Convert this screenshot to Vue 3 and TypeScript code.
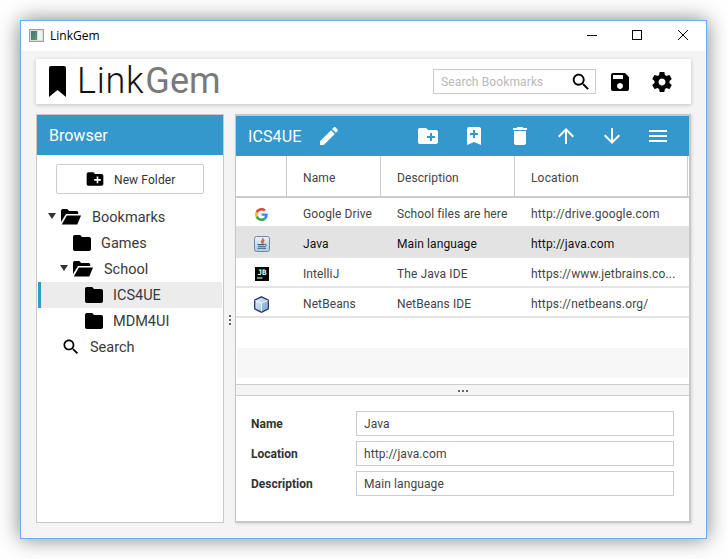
<script setup lang="ts">
interface TreeItem { label: string; icon: 'open' | 'closed' | 'search'; indent: number; arrow?: boolean; selected?: boolean; gap: number }
interface RowItem { icon: string; name: string; desc: string; loc: string; selected?: boolean }

const folder = 'M10 4H4c-1.1 0-1.99.9-1.99 2L2 18c0 1.1.9 2 2 2h16c1.1 0 2-.9 2-2V8c0-1.1-.9-2-2-2h-8l-2-2z'
const search = 'M15.5 14h-.79l-.28-.27C15.41 12.59 16 11.11 16 9.5 16 5.91 13.09 3 9.5 3S3 5.91 3 9.5 5.91 16 9.5 16c1.61 0 3.09-.59 4.23-1.57l.27.28v.79l5 4.99L20.49 19l-4.99-5zm-6 0C7.01 14 5 11.99 5 9.5S7.01 5 9.5 5 14 7.01 14 9.5 11.99 14 9.5 14z'
const newFolder = 'M20 6h-8l-2-2H4c-1.11 0-1.99.89-1.99 2L2 18c0 1.11.89 2 2 2h16c1.11 0 2-.89 2-2V8c0-1.11-.89-2-2-2zm-1 8h-3v3h-2v-3h-3v-2h3V9h2v3h3v2z'

const tree: TreeItem[] = [
  { label: 'Bookmarks', icon: 'open', indent: 10, arrow: true, gap: 11 },
  { label: 'Games', icon: 'closed', indent: 35, gap: 10 },
  { label: 'School', icon: 'open', indent: 22, arrow: true, gap: 11 },
  { label: 'ICS4UE', icon: 'closed', indent: 47, selected: true, gap: 10 },
  { label: 'MDM4UI', icon: 'closed', indent: 47, gap: 10 },
  { label: 'Search', icon: 'search', indent: 23, gap: 9 }
]

const tools: string[] = [
  newFolder,
  'M17 3H7c-1.1 0-2 .9-2 2v16l7-3 7 3V5c0-1.1-.9-2-2-2zm-4 8v3h-2v-3H8V9h3V6h2v3h3v2h-3z',
  'M6 19c0 1.1.9 2 2 2h8c1.1 0 2-.9 2-2V7H6v12zM19 4h-3.5l-1-1h-5l-1 1H5v2h14V4z',
  'M4 12l1.41 1.41L11 7.83V20h2V7.83l5.58 5.59L20 12l-8-8-8 8z',
  'M20 12l-1.41-1.41L13 16.17V4h-2v12.17l-5.58-5.59L4 12l8 8 8-8z',
  'M3 18h18v-2H3v2zm0-5h18v-2H3v2zm0-7v2h18V6H3z'
]

const columns: string[] = ['Name', 'Description', 'Location']

const rows: RowItem[] = [
  { icon: 'google', name: 'Google Drive', desc: 'School files are here', loc: 'http://drive.google.com' },
  { icon: 'java', name: 'Java', desc: 'Main language', loc: 'http://java.com', selected: true },
  { icon: 'jb', name: 'IntelliJ', desc: 'The Java IDE', loc: 'https://www.jetbrains.co...' },
  { icon: 'nb', name: 'NetBeans', desc: 'NetBeans IDE', loc: 'https://netbeans.org/' }
]

const fields = [
  { label: 'Name', value: 'Java' },
  { label: 'Location', value: 'http://java.com' },
  { label: 'Description', value: 'Main language' }
]
</script>

<template>
  <div class="stage">
    <div class="window">
      <div class="titlebar">
        <svg class="appicon" width="15" height="13" viewBox="0 0 15 13">
          <defs>
            <linearGradient id="appg" x1="0" y1="0" x2="1" y2="1">
              <stop offset="0" stop-color="#47707f" />
              <stop offset="1" stop-color="#5f9a72" />
            </linearGradient>
          </defs>
          <rect x="0.5" y="0.5" width="14" height="12" fill="#dcdcdc" stroke="#a0a0a0" />
          <rect x="2" y="2" width="6" height="9" fill="url(#appg)" />
          <rect x="9" y="2" width="4" height="9" fill="#f2f2f2" />
        </svg>
        <span class="apptitle">LinkGem</span>
        <div class="winbtns">
          <svg width="10" height="10" viewBox="0 0 10 10"><path d="M0 5.5h10" stroke="#000" /></svg>
          <svg width="10" height="10" viewBox="0 0 10 10"><rect x="0.5" y="0.5" width="9" height="9" fill="none" stroke="#000" /></svg>
          <svg class="closebtn" width="10" height="10" viewBox="0 0 10 10"><path d="M0 0l10 10M10 0L0 10" stroke="#000" stroke-width="1" /></svg>
        </div>
      </div>

      <div class="content">
        <header class="appbar">
          <svg class="logomark" width="17" height="31" viewBox="0 0 17 31">
            <path d="M2 0h13c1.1 0 2 .9 2 2v29l-8.500-7L0 31V2C0 .9.900 0 2 0z" fill="#000" />
          </svg>
          <div class="logotext"><span class="link">Link</span><span class="gem">Gem</span></div>
          <div class="searchbox">
            <span class="placeholder">Search Bookmarks</span>
            <svg width="22" height="22" viewBox="0 0 24 24"><path :d="search" fill="#000" /></svg>
          </div>
          <svg class="save" width="24" height="24" viewBox="0 0 24 24">
            <path d="M17 3H5c-1.110 0-2 .9-2 2v14c0 1.100.890 2 2 2h14c1.100 0 2-.9 2-2V7l-4-4zm-5 16c-1.660 0-3-1.340-3-3s1.340-3 3-3 3 1.340 3 3-1.340 3-3 3zm3-10H5V5h10v4z" fill="#000" />
          </svg>
          <svg class="gear" width="24" height="24" viewBox="0 0 24 24">
            <path d="M19.430 12.980c.04-.32.07-.64.07-.98s-.03-.66-.07-.98l2.110-1.650c.19-.15.24-.42.12-.64l-2-3.460c-.12-.22-.39-.3-.61-.22l-2.490 1c-.52-.4-1.080-.73-1.690-.98l-.38-2.650C14.460 2.180 14.250 2 14 2h-4c-.25 0-.46.18-.49.42l-.38 2.650c-.61.25-1.170.59-1.690.98l-2.490-1c-.23-.09-.49 0-.61.22l-2 3.460c-.13.22-.07.49.12.64l2.110 1.650c-.04.32-.07.65-.07.98s.03.66.07.98l-2.110 1.650c-.19.15-.24.42-.12.64l2 3.460c.12.22.39.3.61.22l2.490-1c.52.4 1.080.73 1.690.98l.38 2.650c.03.24.24.42.49.42h4c.25 0 .46-.18.49-.42l.38-2.650c.61-.25 1.170-.59 1.690-.98l2.490 1c.23.09.49 0 .61-.22l2-3.460c.12-.22.07-.49-.12-.64l-2.110-1.650zM12 15.500c-1.930 0-3.500-1.570-3.500-3.500s1.570-3.500 3.500-3.500 3.500 1.570 3.500 3.500-1.570 3.500-3.500 3.500z" fill="#000" />
          </svg>
        </header>

        <div class="panes">
          <aside class="browser">
            <div class="browser-head">Browser</div>
            <div class="newfolder-wrap">
              <div class="newfolder">
                <svg width="20" height="20" viewBox="0 0 24 24"><path :d="newFolder" fill="#000" /></svg>
                <span class="newfolder-label">New Folder</span>
              </div>
            </div>
            <ul class="tree">
              <li v-for="item in tree" :key="item.label" class="node" :class="{ selected: item.selected }" :style="{ paddingLeft: item.indent + 'px' }">
                <span v-if="item.arrow" class="arrow"></span>
                <svg v-if="item.icon === 'closed'" width="18" height="16" viewBox="2 4 20 16" preserveAspectRatio="none"><path :d="folder" fill="#000" /></svg>
                <svg v-else-if="item.icon === 'open'" width="20" height="16" viewBox="0 0 20 16">
                  <path d="M0 2C0 .9.8 0 1.800 0h4.400l2 2h7.300c1 0 1.700.7 1.700 1.600V5H5L0 13V2z" fill="#000" />
                  <path d="M5.800 6.500H20L16.300 15.600H.8z" fill="#000" />
                </svg>
                <svg v-else width="20" height="20" viewBox="0 0 24 24"><path :d="search" fill="#000" /></svg>
                <span class="label" :style="{ marginLeft: item.gap + 'px' }">{{ item.label }}</span>
              </li>
            </ul>
          </aside>

          <div class="vsplit"><i></i><i></i><i></i></div>

          <section class="detail">
            <div class="detail-head">
              <span class="folder-title">ICS4UE</span>
              <svg class="pencil" width="24" height="24" viewBox="0 0 24 24">
                <path d="M3 17.250V21h3.750L17.810 9.940l-3.750-3.750L3 17.250zM20.710 7.040c.39-.39.39-1.020 0-1.410l-2.340-2.340c-.39-.39-1.020-.39-1.410 0l-1.830 1.830 3.750 3.750 1.830-1.830z" fill="#fff" />
              </svg>
              <div class="tools">
                <svg v-for="(d, i) in tools" :key="i" width="24" height="24" viewBox="0 0 24 24"><path :d="d" fill="#fff" /></svg>
              </div>
            </div>

            <div class="table">
              <div class="thead">
                <div class="cell-icon th"></div>
                <div v-for="c in columns" :key="c" class="th" :class="'col-' + c.toLowerCase()">{{ c }}</div>
              </div>
              <div v-for="r in rows" :key="r.name" class="row" :class="{ selected: r.selected }">
                <div class="cell-icon">
                  <svg v-if="r.icon === 'google'" width="13" height="13" viewBox="0 0 48 48">
                    <path fill="#EA4335" d="M24 9.500c3.500 0 6.700 1.200 9.200 3.600l6.900-6.900C35.900 2.400 30.500 0 24 0 14.600 0 6.500 5.400 2.600 13.200l8 6.200C12.400 13.700 17.700 9.500 24 9.500z" />
                    <path fill="#4285F4" d="M47 24.500c0-1.600-.1-3.100-.4-4.500H24v9h12.900c-.6 3-2.200 5.500-4.700 7.200l7.700 6C44.400 38 47 31.800 47 24.500z" />
                    <path fill="#FBBC05" d="M10.600 28.600c-.5-1.400-.8-3-.8-4.600s.3-3.200.8-4.600l-8-6.200C.9 16.500 0 20.100 0 24s.9 7.500 2.600 10.800l8-6.200z" />
                    <path fill="#34A853" d="M24 48c6.500 0 11.900-2.100 15.900-5.800l-7.700-6c-2.200 1.400-4.900 2.300-8.200 2.300-6.300 0-11.600-4.200-13.400-9.900l-8 6.200C6.500 42.600 14.600 48 24 48z" />
                  </svg>
                  <svg v-else-if="r.icon === 'java'" width="16" height="16" viewBox="0 0 16 16">
                    <defs>
                      <linearGradient id="javag" x1="0" y1="0" x2="0" y2="1">
                        <stop offset="0" stop-color="#eef2f6" />
                        <stop offset="1" stop-color="#b4c7d9" />
                      </linearGradient>
                    </defs>
                    <rect x="0.500" y="0.500" width="15" height="15" rx="2" fill="url(#javag)" stroke="#6d8aa5" />
                    <path d="M8.800 2.200c1 1.500-2.200 2.400-1 4.200.2.300.5.500.8.700-.4-1.200 2-1.900 1-3.500" fill="none" stroke="#d9601f" stroke-width="1.400" />
                    <path d="M3.500 8.500h7M4 10.300h6M3.500 12.200h8.500" stroke="#2f5f86" stroke-width="1.100" fill="none" />
                    <path d="M10.500 8.200c2.500-.2 2.500 2.100-.5 2.500" stroke="#2f5f86" fill="none" stroke-width=".9" />
                  </svg>
                  <svg v-else-if="r.icon === 'jb'" width="14" height="14" viewBox="0 0 14 14">
                    <rect width="14" height="14" fill="#000" />
                    <text x="7" y="8" text-anchor="middle" class="jbtext">JB</text>
                    <rect x="2" y="10.500" width="5.500" height="1" fill="#fff" />
                  </svg>
                  <svg v-else width="17" height="17" viewBox="0 0 16 17">
                    <defs>
                      <linearGradient id="nbg" x1="0" y1="0" x2="1" y2="1">
                        <stop offset="0" stop-color="#e4f0f8" />
                        <stop offset="1" stop-color="#8fb7d8" />
                      </linearGradient>
                    </defs>
                    <path d="M8 .8l6.600 3.200c.4 3.200.4 6 0 9L8 16.200 1.400 13c-.4-3-.4-5.800 0-9z" fill="url(#nbg)" stroke="#24356f" stroke-width="1.300" />
                    <path d="M2 4.500L8 7l6-2.500M8 7v8.500" stroke="#f3f8fc" stroke-width=".9" fill="none" />
                    <path d="M8.500 7.500l5-2v7.300l-5 2.300z" fill="#7ba5cc" opacity=".55" />
                  </svg>
                </div>
                <div class="td col-name">{{ r.name }}</div>
                <div class="td col-description">{{ r.desc }}</div>
                <div class="td col-location">{{ r.loc }}</div>
              </div>
              <div class="blank"></div>
              <div class="blank odd"></div>
            </div>

            <div class="hsplit"><i></i><i></i><i></i></div>

            <form class="form">
              <div v-for="f in fields" :key="f.label" class="field">
                <label>{{ f.label }}</label>
                <div class="input">{{ f.value }}</div>
              </div>
            </form>
          </section>
        </div>
      </div>
    </div>
  </div>
</template>

<style>
html, body { margin: 0; background: #fff; overflow: hidden; }
</style>

<style scoped>
.stage {
  width: 727px;
  height: 559px;
  box-sizing: border-box;
  padding: 20px;
  font-family: Roboto, sans-serif;
  font-size: 12px;
  color: #333;
}
.window {
  width: 687px;
  height: 519px;
  box-sizing: border-box;
  border: 1px solid #64b0ff;
  background: #f4f4f4;
  box-shadow: 0 0 20px rgba(0, 0, 0, 0.5);
  display: flex;
  flex-direction: column;
}
.titlebar {
  height: 30px;
  flex: none;
  box-sizing: border-box;
  padding: 0 0 2px 8px;
  background: #fff;
  display: flex;
  align-items: center;
}
.appicon { flex: none; }
.apptitle {
  margin-left: 6px;
  font-family: "Open Sans", sans-serif;
  font-size: 12px;
  color: #000;
}
.winbtns {
  margin-left: auto;
  margin-right: 18px;
  display: flex;
  gap: 35px;
}
.closebtn { margin-left: 1px; }
.content {
  flex: 1;
  min-height: 0;
  display: flex;
  flex-direction: column;
  padding: 8px 15px 15px;
  gap: 10px;
}
.appbar {
  height: 45px;
  flex: none;
  background: #fff;
  box-shadow: 0 1px 4px rgba(0, 0, 0, 0.22);
  display: flex;
  align-items: center;
  padding-left: 13px;
}
.logomark { flex: none; }
.logotext {
  margin-left: 11px;
  font-size: 36px;
  font-weight: 300;
  line-height: 45px;
  letter-spacing: 0.7px;
}
.link { color: #111; }
.gem { color: #7a7a7a; font-weight: 400; margin-left: 1px; letter-spacing: 0.1px; }
.searchbox {
  margin-left: auto;
  width: 163px;
  height: 25px;
  box-sizing: border-box;
  border: 1px solid #ccc;
  display: flex;
  align-items: center;
  justify-content: space-between;
  padding: 0 3px 0 7px;
}
.placeholder { font-size: 12px; color: #b9b9b9; letter-spacing: 0.12px; }
.save { margin-left: 12px; flex: none; }
.gear { margin-left: 18px; margin-right: 17px; flex: none; }

.panes {
  flex: 1;
  min-height: 0;
  display: flex;
}
.browser {
  width: 188px;
  flex: none;
  box-sizing: border-box;
  background: #fff;
  border: 1px solid #c8c8c8;
  display: flex;
  flex-direction: column;
}
.browser-head {
  height: 40px;
  flex: none;
  background: #3498cd;
  color: #fff;
  font-size: 16px;
  line-height: 42px;
  padding-left: 12px;
}
.newfolder-wrap { padding: 9px 19px 0; }
.newfolder {
  height: 30px;
  box-sizing: border-box;
  border: 1px solid #ccc;
  border-radius: 2px;
  display: flex;
  align-items: center;
  padding-left: 28px;
  gap: 9px;
  color: #333;
  letter-spacing: 0.1px;
}
.newfolder-label { padding-top: 2px; }
.tree { list-style: none; margin: 10px 1px 0; padding: 0; }
.node {
  height: 26px;
  display: flex;
  align-items: center;
  box-sizing: border-box;
  font-size: 14.500px;
  color: #3a3a3a;
}
.node.selected {
  background: #ececec;
  box-shadow: inset 3px 0 0 #3498cd;
}
.arrow {
  width: 0;
  height: 0;
  border-left: 4px solid transparent;
  border-right: 4px solid transparent;
  border-top: 6px solid #333;
  margin-right: 5px;
  margin-top: -3px;
}
.vsplit {
  width: 11px;
  flex: none;
  display: flex;
  flex-direction: column;
  align-items: center;
  justify-content: center;
  gap: 2px;
  padding-top: 3px;
}
.vsplit i, .hsplit i {
  display: block;
  width: 2px;
  height: 2px;
  background: #666;
}
.detail {
  flex: 1;
  min-width: 0;
  box-sizing: border-box;
  background: #fff;
  border: 1px solid #c8c8c8;
  border-width: 2px 2px 2px 1px;
  box-shadow: 1px 1px 3px rgba(0, 0, 0, 0.12);
  display: flex;
  flex-direction: column;
}
.detail-head {
  height: 40px;
  flex: none;
  background: #3498cd;
  color: #fff;
  display: flex;
  align-items: center;
  padding-left: 12px;
}
.folder-title { font-size: 16px; letter-spacing: 0.1px; }
.pencil { margin-left: 16px; }
.tools {
  margin-left: auto;
  margin-right: 19px;
  display: flex;
  gap: 22px;
}
.table { flex: 1; min-height: 0; letter-spacing: 0.1px; }
.thead {
  height: 42px;
  box-sizing: border-box;
  display: flex;
  border-bottom: 2px solid #ccc;
}
.th {
  height: 100%;
  box-sizing: border-box;
  border-right: 1px solid #ccc;
  line-height: 45px;
  padding-left: 16px;
  color: #444;
}
.cell-icon {
  width: 51px;
  flex: none;
  display: flex;
  align-items: center;
  justify-content: center;
}
.cell-icon.th { padding: 0; }
.col-name { width: 94px; flex: none; box-sizing: border-box; padding-left: 16px; }
.col-description { width: 134px; flex: none; box-sizing: border-box; padding-left: 16px; }
.col-location { width: 173px; flex: none; box-sizing: border-box; padding-left: 16px; letter-spacing: 0.16px; }
.row {
  height: 30px;
  box-sizing: border-box;
  padding-top: 4px;
  border-bottom: 2px solid #e4e4e4;
  display: flex;
  align-items: center;
  color: #444;
}
.row.selected { background: #e3e3e3; color: #111; }
.td { white-space: nowrap; }
.jbtext {
  font-family: "DejaVu Sans Mono", monospace;
  font-size: 7.500px;
  font-weight: 700;
  fill: #fff;
}
.blank { height: 30px; }
.blank.odd { background: #f7f7f7; margin: 0 1px; }
.hsplit {
  height: 12px;
  flex: none;
  box-sizing: border-box;
  padding-top: 1px;
  background: #f4f4f4;
  border-top: 1px solid #ccc;
  border-bottom: 1px solid #ccc;
  display: flex;
  align-items: center;
  justify-content: center;
  gap: 2px;
}
.form {
  height: 125px;
  flex: none;
  box-sizing: border-box;
  padding: 15px 15px 0;
  display: flex;
  flex-direction: column;
  gap: 5px;
}
.field { display: flex; align-items: center; height: 25px; }
.field label {
  width: 105px;
  flex: none;
  font-weight: 700;
  color: #333;
}
.input {
  flex: 1;
  height: 25px;
  box-sizing: border-box;
  border: 1px solid #ccc;
  line-height: 24px;
  padding-left: 7px;
  color: #444;
  letter-spacing: 0.1px;
}
</style>
